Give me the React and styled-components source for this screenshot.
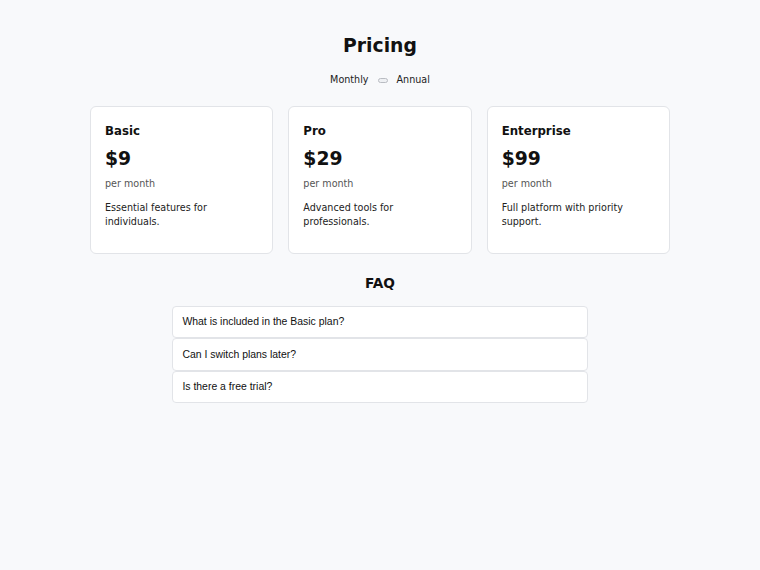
import styled, { createGlobalStyle } from 'styled-components';
import { useState } from 'react';

const plans = [
  { name: 'Basic', price: '$9', desc: 'Essential features for individuals.' },
  { name: 'Pro', price: '$29', desc: 'Advanced tools for professionals.' },
  { name: 'Enterprise', price: '$99', desc: 'Full platform with priority support.' },
];

const faqs = [
  'What is included in the Basic plan?',
  'Can I switch plans later?',
  'Is there a free trial?',
];

const GlobalStyle = createGlobalStyle`
  body {
    margin: 0;
    background: #f8f9fb;
    font-family: 'DejaVu Sans', sans-serif;
    color: #111;
  }
`;

const App = () => {
  const [annual, setAnnual] = useState(false);

  return (
    <>
      <GlobalStyle />
      <Page>
        <Title>Pricing</Title>
        <ToggleRow>
          <span>Monthly</span>
          <Switch
            type='button'
            aria-pressed={annual}
            onClick={() => setAnnual(!annual)}
          />
          <span>Annual</span>
        </ToggleRow>
        <Cards>
          {plans.map((plan) => (
            <Card key={plan.name}>
              <PlanName>{plan.name}</PlanName>
              <Price>{plan.price}</Price>
              <Period>per month</Period>
              <Desc>{plan.desc}</Desc>
            </Card>
          ))}
        </Cards>
        {/* FAQ */}
        <FaqTitle>FAQ</FaqTitle>
        <FaqList>
          {faqs.map((q) => (
            <FaqItem key={q} type='button'>
              {q}
            </FaqItem>
          ))}
        </FaqList>
      </Page>
    </>
  );
};

const Page = styled.main`
  width: 580px;
  margin: 0 auto;
  padding-top: 34px;
  display: flex;
  flex-direction: column;
  align-items: center;
`;

const Title = styled.h1`
  margin: 0;
  font-size: 18.8px;
  line-height: 23px;
  font-weight: 700;
`;

const ToggleRow = styled.div`
  margin-top: 16px;
  display: flex;
  align-items: center;
  gap: 9px;
  font-size: 9.6px;
  line-height: 14px;
  color: #222;
`;

const Switch = styled.button`
  width: 10px;
  height: 5px;
  padding: 0;
  border: 1px solid #b9bcc2;
  border-radius: 3px;
  background: #eef0f3;
  cursor: pointer;
`;

const Cards = styled.div`
  margin-top: 19px;
  width: 100%;
  display: grid;
  grid-template-columns: repeat(3, 1fr);
  gap: 15px;
`;

const Card = styled.div`
  background: #fff;
  border: 1px solid #e2e4e8;
  border-radius: 6px;
  padding: 16px 14px 24px;
`;

const PlanName = styled.h3`
  margin: 0;
  font-size: 11.75px;
  line-height: 16px;
  font-weight: 700;
`;

const Price = styled.div`
  margin-top: 9px;
  font-size: 18.8px;
  line-height: 22px;
  font-weight: 700;
`;

const Period = styled.div`
  margin-top: 7px;
  font-size: 9.6px;
  line-height: 14px;
  color: #555;
`;

const Desc = styled.p`
  margin: 10px 0 0;
  font-size: 9.6px;
  line-height: 14px;
  color: #222;
`;

const FaqTitle = styled.h2`
  margin: 21px 0 0;
  font-size: 13.7px;
  line-height: 17px;
  font-weight: 700;
`;

const FaqList = styled.div`
  margin-top: 14px;
  width: 416px;
  display: flex;
  flex-direction: column;
`;

const FaqItem = styled.button`
  font-family: 'Liberation Sans', Arial, sans-serif;
  font-size: 10.45px;
  line-height: 12px;
  text-align: left;
  color: #111;
  background: #fff;
  border: 1px solid #e2e4e8;
  border-radius: 4px;
  padding: 9.2px 9.4px;
  cursor: pointer;
`;

export default App;
